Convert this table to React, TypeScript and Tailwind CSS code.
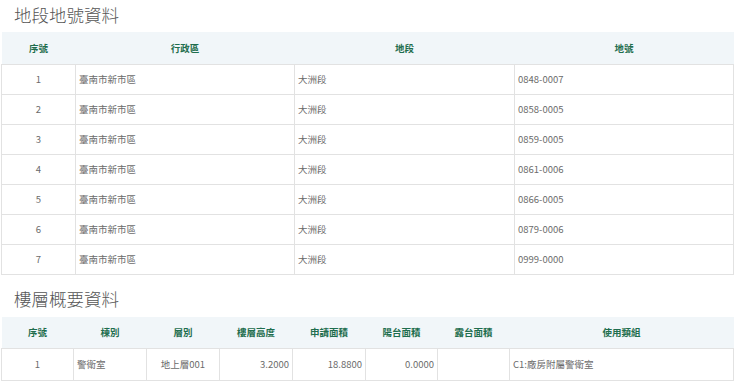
const lots = [
  ['1', '臺南市新市區', '大洲段', '0848-0007'],
  ['2', '臺南市新市區', '大洲段', '0858-0005'],
  ['3', '臺南市新市區', '大洲段', '0859-0005'],
  ['4', '臺南市新市區', '大洲段', '0861-0006'],
  ['5', '臺南市新市區', '大洲段', '0866-0005'],
  ['6', '臺南市新市區', '大洲段', '0879-0006'],
  ['7', '臺南市新市區', '大洲段', '0999-0000'],
]

const th = 'h-[32px] text-[9.5px] font-bold text-[#1f6e4e] text-center align-middle'
const td = 'h-[30px] border border-[#e2e2e2] px-[3px] text-[9.5px] text-[#6b6b6b] align-middle'
const title = 'pl-[13px] text-[17.5px] leading-[28px] font-light text-[#555]'

export default function App() {
  return (
    <div
      className="w-[740px] bg-white pl-[1px]"
      style={{ fontFamily: '"Noto Sans CJK TC", "Noto Sans", sans-serif' }}
    >
      <h2 className={`${title} pt-[1px] pb-[3px]`}>地段地號資料</h2>
      <table className="w-[733px] table-fixed border-collapse">
        <colgroup>
          <col className="w-[74px]" />
          <col className="w-[219px]" />
          <col className="w-[220px]" />
          <col />
        </colgroup>
        <thead>
          <tr className="bg-[#f1f6f9]">
            <th className={th}>序號</th>
            <th className={th}>行政區</th>
            <th className={th}>地段</th>
            <th className={th}>地號</th>
          </tr>
        </thead>
        <tbody>
          {lots.map((r) => (
            <tr key={r[0]}>
              <td className={`${td} text-center`}>{r[0]}</td>
              <td className={td}>{r[1]}</td>
              <td className={td}>{r[2]}</td>
              <td className={td}>{r[3]}</td>
            </tr>
          ))}
        </tbody>
      </table>

      <h2 className={`${title} mt-[10px] pb-[4px]`}>樓層概要資料</h2>
      <table className="w-[733px] table-fixed border-collapse">
        <colgroup>
          <col className="w-[72px]" />
          <col className="w-[73px]" />
          <col className="w-[73px]" />
          <col className="w-[73px]" />
          <col className="w-[73px]" />
          <col className="w-[72px]" />
          <col className="w-[72px]" />
          <col />
        </colgroup>
        <thead>
          <tr className="bg-[#f1f6f9]">
            <th className={th}>序號</th>
            <th className={th}>棟別</th>
            <th className={th}>層別</th>
            <th className={th}>樓層高度</th>
            <th className={th}>申請面積</th>
            <th className={th}>陽台面積</th>
            <th className={th}>露台面積</th>
            <th className={th}>使用類組</th>
          </tr>
        </thead>
        <tbody>
          <tr>
            <td className={`${td} h-[32px] text-center`}>1</td>
            <td className={`${td} h-[32px]`}>警衛室</td>
            <td className={`${td} h-[32px] text-center`}>地上層001</td>
            <td className={`${td} h-[32px] text-right`}>3.2000</td>
            <td className={`${td} h-[32px] text-right`}>18.8800</td>
            <td className={`${td} h-[32px] text-right`}>0.0000</td>
            <td className={`${td} h-[32px]`}></td>
            <td className={`${td} h-[32px]`}>C1:廠房附屬警衛室</td>
          </tr>
        </tbody>
      </table>
    </div>
  )
}
